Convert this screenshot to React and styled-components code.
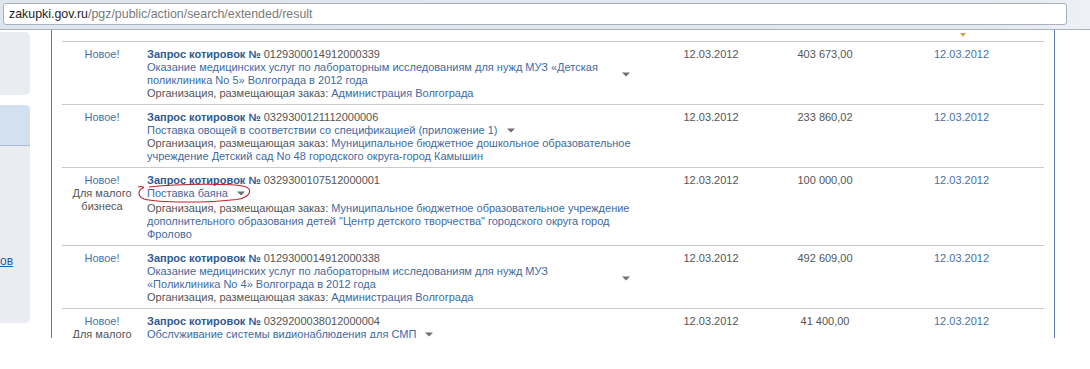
import React from 'react';
import styled, {createGlobalStyle} from 'styled-components';

const GlobalStyle = createGlobalStyle`
  html, body {
    margin: 0;
    padding: 0;
    background: #fff;
    overflow: hidden;
  }
  body {
    font-family: "Liberation Sans", Arial, sans-serif;
    font-size: 11px;
    color: #555;
  }
`;

const rows = [
  {
    badges: ['Новое!'],
    number: '0129300014912000339',
    desc: 'Оказание медицинских услуг по лабораторным исследованиям для нужд МУЗ «Детская поликлиника No 5» Волгограда в 2012 года',
    org: 'Администрация Волгограда',
    date: '12.03.2012',
    price: '403 673,00',
    published: '12.03.2012',
  },
  {
    badges: ['Новое!'],
    number: '0329300121112000006',
    desc: 'Поставка овощей в соответствии со спецификацией (приложение 1)',
    org: 'Муниципальное бюджетное дошкольное образовательное учреждение Детский сад No 48 городского округа-город Камышин',
    date: '12.03.2012',
    price: '233 860,02',
    published: '12.03.2012',
  },
  {
    badges: ['Новое!', 'Для малого бизнеса'],
    number: '0329300107512000001',
    desc: 'Поставка баяна',
    marked: true,
    org: 'Муниципальное бюджетное образовательное учреждение дополнительного образования детей "Центр детского творчества" городского округа город Фролово',
    date: '12.03.2012',
    price: '100 000,00',
    published: '12.03.2012',
  },
  {
    badges: ['Новое!'],
    number: '0129300014912000338',
    desc: 'Оказание медицинских услуг по лабораторным исследованиям для нужд МУЗ «Поликлиника No 4» Волгограда в 2012 года',
    org: 'Администрация Волгограда',
    date: '12.03.2012',
    price: '492 609,00',
    published: '12.03.2012',
  },
  {
    badges: ['Новое!', 'Для малого бизнеса'],
    number: '0329200038012000004',
    desc: 'Обслуживание системы видионаблюдения для СМП',
    org: 'Муниципальное учреждение здравоохранения',
    date: '12.03.2012',
    price: '41 400,00',
    published: '12.03.2012',
  },
];

const Caret = () => (
  <CaretIcon width="8" height="5" viewBox="0 0 8 5">
    <path d="M0 0.5 H8 L4 4.5 Z" fill="#6f6f6f" />
  </CaretIcon>
);

const Scribble = () => (
  <ScribbleSvg width="118" height="22" viewBox="0 0 118 22">
    <path
      d="M12 4 C 45 0.5, 95 0.5, 108 3.5 C 116 6, 114 14, 100 16.5 C 70 20, 22 20, 7 16 C 0 13, 1 7, 6 5 C 8 4, 4 3, 1 4"
      fill="none"
      stroke="#c0222c"
      strokeWidth="1.1"
    />
  </ScribbleSvg>
);

const App = () => {
  return (
    <>
      <GlobalStyle />
      <Chrome>
        <AddressBar>
          <Host>zakupki.gov.ru</Host>
          <Path>/pgz/public/action/search/extended/result</Path>
        </AddressBar>
      </Chrome>
      <Page>
        <Sidebar>
          <SideBox />
          <SideBox>
            <SideHead />
            <SideBody>
              <SideLink>ов</SideLink>
            </SideBody>
          </SideBox>
        </Sidebar>
        <Main>
          <TableHead>
            <SortCell>
              <SortArrow />
            </SortCell>
          </TableHead>
          {rows.map(row => (
            <Row key={row.number}>
              <BadgeCell>
                {row.badges.map((b, i) => (
                  <Badge key={b} $plain={i > 0}>
                    {b}
                  </Badge>
                ))}
              </BadgeCell>
              <InfoCell>
                <Title>
                  <b>Запрос котировок №</b> <span>{row.number}</span>
                </Title>
                <DescLine $spaced={row.marked}>
                  <DescText>{row.desc}</DescText>
                  <Caret />
                  {row.marked && <Scribble />}
                </DescLine>
                <Org>
                  Организация, размещающая заказ: <OrgLink>{row.org}</OrgLink>
                </Org>
              </InfoCell>
              <PlainCell>{row.date}</PlainCell>
              <PlainCell>{row.price}</PlainCell>
              <LinkCell>{row.published}</LinkCell>
            </Row>
          ))}
        </Main>
      </Page>
    </>
  );
};

const Chrome = styled.div`
  height: 30px;
  padding: 3px 23px 0 3px;
  box-sizing: border-box;
  background: linear-gradient(to right, #dfe5ec 0%, #e4e9ef 90%, #eef1f5 100%);
  border-bottom: 1px solid #a9b2bf;
`;

const AddressBar = styled.div`
  height: 22px;
  box-sizing: border-box;
  background: #fff;
  border: 1px solid #a7b0bc;
  border-radius: 3px;
  display: flex;
  align-items: center;
  padding-left: 5px;
  font-family: "Liberation Sans", Arial, sans-serif;
  font-size: 12.4px;
`;

const Host = styled.span`
  color: #1e1e1e;
`;

const Path = styled.span`
  color: #7a7a7a;
`;

const Page = styled.div`
  display: flex;
  gap: 21px;
  height: 308px;
  overflow: hidden;
`;

const Sidebar = styled.div`
  width: 30px;
  display: flex;
  flex-direction: column;
  gap: 10px;
  padding-top: 2px;
`;

const SideBox = styled.div`
  background: #e9edf1;
  border-radius: 0 5px 5px 0;
  min-height: 63px;
  display: flex;
  flex-direction: column;
  overflow: hidden;
  &:last-child {
    height: 218px;
  }
`;

const SideHead = styled.div`
  height: 40px;
  background: #d3e0ef;
  border-bottom: 1px solid #a9bcd5;
`;

const SideBody = styled.div`
  padding-top: 108px;
`;

const SideLink = styled.a`
  font-family: "Liberation Sans", Arial, sans-serif;
  font-size: 12px;
  color: #1d5e9e;
  text-decoration: underline;
`;

const Main = styled.div`
  width: 982px;
  border-left: 1px solid #5877a6;
  border-right: 1px solid #5877a6;
  padding: 0 10px;
  height: 308px;
  overflow: hidden;
`;

const TableHead = styled.div`
  height: 11px;
  border-bottom: 1px solid #c9c9c9;
  display: flex;
  justify-content: flex-end;
`;

const SortCell = styled.div`
  width: 153px;
  padding-right: 10px;
  box-sizing: border-box;
  display: flex;
  justify-content: center;
  padding-top: 3px;
`;

const SortArrow = styled.div`
  width: 0;
  height: 0;
  border-left: 3px solid transparent;
  border-right: 3px solid transparent;
  border-top: 4px solid #d9a640;
`;

const Row = styled.div`
  display: grid;
  grid-template-columns: 80px 520px 98px 130px 153px;
  border-bottom: 1px solid #c9c9c9;
  padding: 6px 0 4px;
  line-height: 13px;
`;

const BadgeCell = styled.div`
  text-align: center;
  display: flex;
  flex-direction: column;
  align-items: center;
`;

const Badge = styled.div`
  color: ${p => (p.$plain ? '#555' : '#4a70a6')};
  width: 60px;
`;

const InfoCell = styled.div`
  padding: 0 10px 0 5px;
`;

const Title = styled.div`
  b {
    color: #2f5a92;
    font-weight: bold;
  }
  span {
    color: #555;
  }
`;

const DescLine = styled.div`
  position: relative;
  display: flex;
  align-items: center;
  margin-bottom: ${p => (p.$spaced ? '2px' : '0')};
`;

const DescText = styled.span`
  max-width: 466px;
  color: #3f6aa0;
`;

const CaretIcon = styled.svg`
  flex: none;
  margin-left: 9px;
`;

const ScribbleSvg = styled.svg`
  position: absolute;
  left: -10px;
  top: -4px;
  pointer-events: none;
`;

const Org = styled.div`
  color: #555;
`;

const OrgLink = styled.span`
  color: #3f6aa0;
`;

const PlainCell = styled.div`
  text-align: center;
  color: #555;
`;

const LinkCell = styled.div`
  text-align: center;
  padding-right: 10px;
  color: #4a70a6;
`;

export default App;
